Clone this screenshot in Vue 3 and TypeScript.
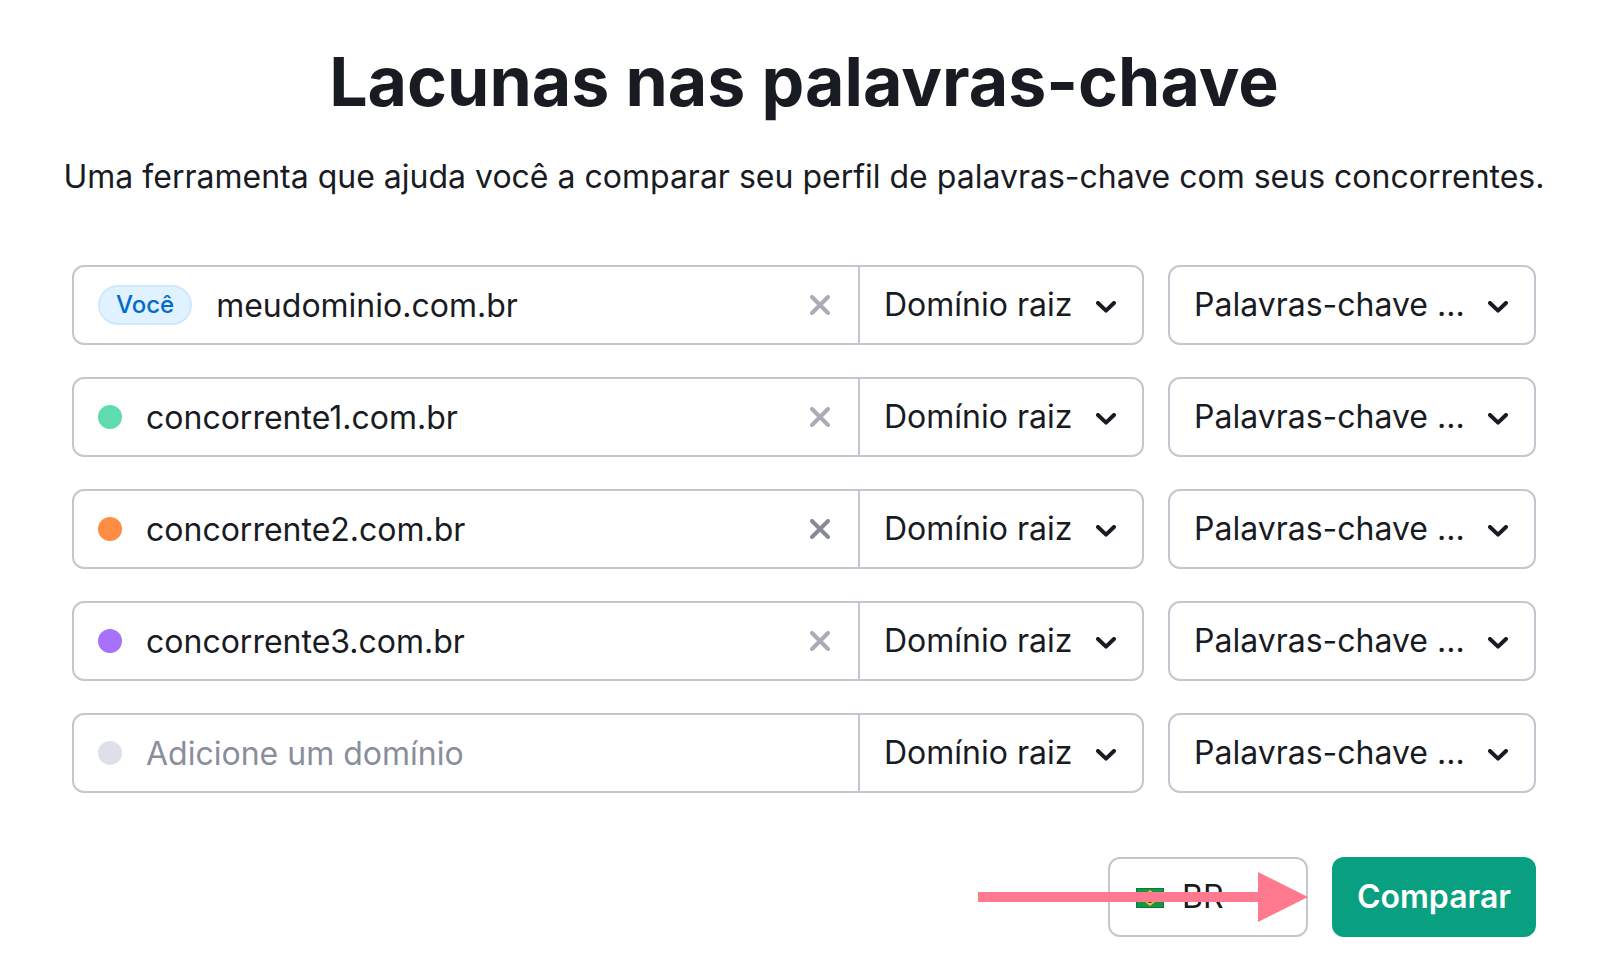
<script setup lang="ts">
import { ref } from 'vue'

interface DomainRow {
  id: string
  label: string
  value: string
  tone: 'you' | 'green' | 'orange' | 'purple' | 'empty'
  strong?: boolean
}

const rows = ref<DomainRow[]>([
  { id: 'd0', label: 'Seu domínio', value: 'meudominio.com.br', tone: 'you' },
  { id: 'd1', label: 'Concorrente 1', value: 'concorrente1.com.br', tone: 'green' },
  { id: 'd2', label: 'Concorrente 2', value: 'concorrente2.com.br', tone: 'orange', strong: true },
  { id: 'd3', label: 'Concorrente 3', value: 'concorrente3.com.br', tone: 'purple' },
  { id: 'd4', label: 'Concorrente 4', value: '', tone: 'empty' },
])
</script>

<template>
  <main class="page">
    <h1 class="title">Lacunas nas palavras-chave</h1>
    <p class="subtitle">
      Uma ferramenta que ajuda você a comparar seu perfil de palavras-chave com seus concorrentes.
    </p>

    <form class="form" @submit.prevent>
      <div v-for="row in rows" :key="row.id" class="row">
        <div class="group">
          <div class="field">
            <label v-if="row.tone === 'you'" class="badge" :for="row.id">Você</label>
            <label v-else class="dot" :class="row.tone" :for="row.id" :aria-label="row.label"></label>
            <input
              :id="row.id"
              v-model="row.value"
              class="input"
              type="text"
              placeholder="Adicione um domínio"
            />
            <button
              v-if="row.value"
              class="clear"
              :class="{ strong: row.strong }"
              type="button"
              aria-label="Limpar"
              @click="row.value = ''"
            >
              <svg viewBox="0 0 20 20" width="20" height="20" aria-hidden="true">
                <path d="M2 2L18 18M18 2L2 18" />
              </svg>
            </button>
          </div>
          <div class="picker scope">
            <select class="select" aria-label="Escopo do domínio">
              <option>Domínio raiz</option>
            </select>
            <svg class="chevron" viewBox="0 0 20 12" width="20" height="12" aria-hidden="true">
              <path d="M2 2L10 9.6L18 2" />
            </svg>
          </div>
        </div>
        <div class="picker boxed keywords">
          <select class="select" aria-label="Tipo de palavras-chave">
            <option>Palavras-chave ...</option>
          </select>
          <svg class="chevron" viewBox="0 0 20 12" width="20" height="12" aria-hidden="true">
            <path d="M2 2L10 9.6L18 2" />
          </svg>
        </div>
      </div>

      <div class="actions">
        <div class="picker boxed country">
          <select class="select" aria-label="País">
            <option>BR</option>
          </select>
          <svg class="flag" viewBox="0 0 28 20" width="28" height="20" aria-hidden="true">
            <rect width="28" height="20" fill="#0b7a38" />
            <rect x="1" y="1" width="26" height="18" fill="#149645" />
            <path d="M14 2L24 10L14 18L4 10Z" fill="#fbc02d" />
            <circle cx="14" cy="10" r="5" fill="#21217f" />
          </svg>
          <svg class="chevron" viewBox="0 0 20 12" width="20" height="12" aria-hidden="true">
            <path d="M2 2L10 9.6L18 2" />
          </svg>
          <svg class="arrow" viewBox="0 0 330 50" width="330" height="50" aria-hidden="true">
            <path d="M0 20H280V0L330 25L280 50V30H0Z" fill="#ff798f" />
          </svg>
        </div>
        <button class="compare" type="submit">Comparar</button>
      </div>
    </form>
  </main>
</template>

<style>
body {
  margin: 0;
  background: #fff;
}
</style>

<style scoped>
.page {
  box-sizing: border-box;
  padding: 37px 74px 36px 72px;
  color: #191b23;
  font-family: Inter, "Liberation Sans", sans-serif;
  font-size: 32px;
  line-height: 48px;
}

.title {
  margin: 0;
  text-align: center;
  font-size: 68px;
  line-height: 88px;
  font-weight: 700;
}

.subtitle {
  margin: 28px -24px 0;
  text-align: center;
}

.form {
  display: flex;
  flex-direction: column;
  gap: 32px;
  margin-top: 64px;
}

.row {
  display: flex;
  gap: 24px;
}

.group {
  display: flex;
  flex: 1;
  min-width: 0;
}

.group,
.boxed {
  box-sizing: border-box;
  height: 80px;
  border: 2px solid #c4c7cf;
  border-radius: 12px;
  background: #fff;
}

.field {
  display: flex;
  flex: 1;
  align-items: center;
  min-width: 0;
  padding: 0 24px;
}

.badge {
  box-sizing: border-box;
  height: 40px;
  padding: 0 16px;
  border: 2px solid #cfe8fd;
  border-radius: 20px;
  background: #e0f1ff;
  color: #006dca;
  font-size: 24px;
  line-height: 36px;
  font-weight: 500;
}

.dot {
  flex: none;
  width: 24px;
  height: 24px;
  border-radius: 50%;
}

.green {
  background: #5edcad;
}

.orange {
  background: #ff8c43;
}

.purple {
  background: #a871fb;
}

.empty {
  background: #dde0e8;
}

.input {
  flex: 1;
  min-width: 0;
  height: 76px;
  margin: 0;
  padding: 0 24px;
  border: 0;
  outline: 0;
  background: transparent;
  color: inherit;
  font: inherit;
}

.input::placeholder {
  color: #8a8e9b;
  opacity: 1;
}

.clear {
  display: flex;
  flex: none;
  padding: 4px;
  border: 0;
  background: transparent;
  color: #a9abb6;
  cursor: pointer;
}

.strong {
  color: #878b98;
}

.clear path,
.chevron path {
  fill: none;
  stroke: currentColor;
  stroke-width: 4;
  stroke-linecap: round;
  stroke-linejoin: round;
}

.picker {
  display: grid;
  flex: none;
  align-items: center;
}

.picker > .select,
.picker > .chevron,
.picker > .flag {
  grid-area: 1 / 1;
}

.scope {
  width: 282px;
  border-left: 2px solid #c4c7cf;
}

.keywords {
  width: 368px;
}

.country {
  position: relative;
  width: 200px;
}

.select {
  width: 100%;
  height: 76px;
  margin: 0;
  padding: 0 60px 0 24px;
  border: 0;
  outline: 0;
  background: transparent;
  color: inherit;
  font: inherit;
  appearance: none;
  cursor: pointer;
}

.country .select {
  padding: 0 48px 0 72px;
}

.chevron {
  justify-self: end;
  margin: 4px 26px 0 0;
  pointer-events: none;
}

.flag {
  margin: 2px 0 0 26px;
  pointer-events: none;
}

.arrow {
  position: absolute;
  top: 13px;
  right: -2px;
  pointer-events: none;
}

.actions {
  display: flex;
  justify-content: flex-end;
  gap: 24px;
  margin-top: 32px;
}

.compare {
  height: 80px;
  padding: 0 25px;
  border: 0;
  border-radius: 12px;
  background: #08a081;
  color: #fff;
  font: inherit;
  font-weight: 600;
  cursor: pointer;
}
</style>
